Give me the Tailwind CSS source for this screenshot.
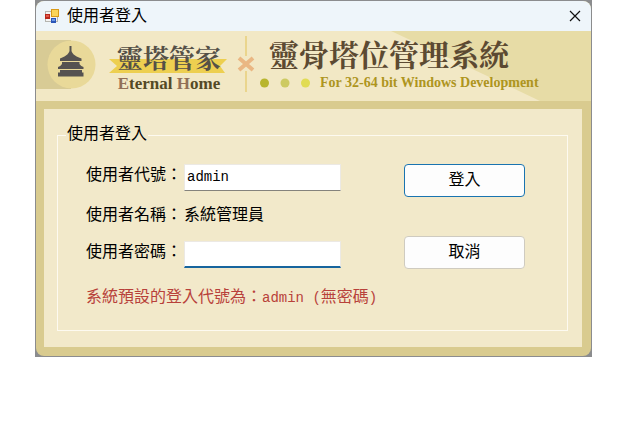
<!DOCTYPE html>
<html lang="zh-Hant">
<head>
<meta charset="utf-8">
<meta name="viewport" content="width=device-width, initial-scale=1">
<title>使用者登入</title>
<script src="https://cdn.jsdelivr.net/npm/@tailwindcss/browser@4"></script>
</head>
<body class="bg-white pl-[35px] pr-[34px] font-['Liberation_Mono','Noto_Sans_CJK_TC',monospace] text-black">
<div class="bg-[#8b8c8e] p-px">
<main class="overflow-hidden rounded-lg bg-[#d9cb8f]">
  <header class="flex h-[30px] items-center bg-[#eef5fa] pb-1 pl-[9px] pr-2">
    <svg class="mt-1 size-[14px]" viewBox="0 0 14 14" aria-hidden="true">
      <rect x="0.5" y="2.5" width="12" height="10" fill="#f4f4f4" stroke="#b5b5b0"/>
      <rect x="0" y="5" width="5" height="5" fill="#b8271c"/><rect x="1" y="6" width="3" height="2" fill="#e0584a"/>
      <rect x="6" y="0" width="8" height="8" fill="#d99a18"/><rect x="7" y="1" width="6" height="6" fill="#fbd55a"/>
      <rect x="6" y="9" width="5" height="5" fill="#2a55b8"/><rect x="7" y="10" width="3" height="2" fill="#6f9be8"/>
    </svg>
    <h1 class="ml-2 flex-1 font-['Noto_Sans_CJK_TC',sans-serif] text-[16px] leading-5">使用者登入</h1>
    <button type="button" aria-label="關閉" class="mt-1 flex size-4 items-center justify-center">
      <svg class="size-[12px]" viewBox="0 0 12 12" aria-hidden="true"><path d="M1 1 11 11M11 1 1 11" stroke="#111" stroke-width="1.2"/></svg>
    </button>
  </header>

  <section class="relative flex h-[70px] overflow-hidden bg-[#f2e8c5]">
    <svg class="absolute inset-0 size-full" viewBox="0 0 555 70" preserveAspectRatio="xMaxYMid slice" aria-hidden="true">
      <path d="M355 0H555V70H504L430 35Z" fill="#e7dca6"/>
    </svg>
    <svg class="relative h-[70px] w-[60px] shrink-0" viewBox="0 0 60 70" aria-hidden="true">
      <path d="M0 9H35V58H0Z" fill="#d8cb95"/>
      <circle cx="35.500" cy="33.500" r="24" fill="#e9d999"/>
      <g fill="#555251">
        <path d="M33.500 15h2v5c1 3.500 4.500 5.500 10 7.500v2.500H24v-2.500c5-2 8.500-4 9.500-7.500Z"/>
        <path d="M26 31h17.500v2c1 1.500 2.500 2.500 4 3v2H22v-2c1.500-.5 3-1.500 4-3Z"/>
        <path d="M24 39h22v2.500h1.500V45.500H22V41.500h2Z"/>
      </g>
    </svg>
    <div class="relative ml-[13px] flex w-[120px] shrink-0 flex-col items-center pt-[11px]">
      <svg class="absolute left-0 top-7 h-[15px] w-[118px]" viewBox="0 0 118 15" aria-hidden="true">
        <path d="M0 0H118L111 7 116 14H0L8 7Z" fill="#edcf50"/>
      </svg>
      <p class="relative font-['Noto_Serif_CJK_TC','Noto_Sans_CJK_TC',serif] text-[26px] font-bold leading-[30px] text-[#555047]">靈塔管家</p>
      <p class="mt-1 whitespace-nowrap font-['Liberation_Serif',serif] text-[17px] font-bold leading-4 text-[#544a25]"><span class="text-[#927057]">E</span>ternal <span class="text-[#927057]">H</span>ome</p>
    </div>
    <svg class="relative ml-[8px] h-[70px] w-[18px] shrink-0" viewBox="0 0 18 70" aria-hidden="true">
      <path d="M9 5V25M9 40V61" stroke="#ead58d" stroke-width="2"/>
      <path d="M2 27 16 39M16 27 2 39" stroke="#eab783" stroke-width="4"/>
    </svg>
    <div class="relative ml-[5px] pt-[6px]">
      <p class="whitespace-nowrap pl-[9px] font-['Noto_Serif_CJK_TC','Noto_Sans_CJK_TC',serif] text-[30px] font-bold leading-8 text-[#5c4a32]">靈骨塔位管理系統</p>
      <div class="mt-[6px] flex items-center">
        <svg class="h-[10px] w-[50px]" viewBox="0 0 50 10" aria-hidden="true">
          <circle cx="4.500" cy="5" r="4.500" fill="#b8b52e"/><circle cx="25" cy="5" r="4.500" fill="#cdca62"/><circle cx="45.500" cy="5" r="4.500" fill="#e1dc54"/>
        </svg>
        <p class="ml-[10px] whitespace-nowrap font-['Liberation_Serif',serif] text-[14px] font-bold leading-4 text-[#ae951e]">For 32-64 bit Windows Development</p>
      </div>
    </div>
  </section>

  <div class="mb-[9px] ml-2 mr-[9px] mt-2 bg-[#f2e9ca] pb-4 pl-[13px] pr-[14px] pt-4">
    <form>
      <fieldset class="border border-[#fdfaf0] pb-[22px] pl-7 pr-[42px] pt-[19px]">
        <legend class="-ml-5 px-px text-[16px] leading-5">使用者登入</legend>
        <div class="flex justify-between">
          <div class="grid grid-cols-[98px_157px] gap-y-[14px] text-[16px]">
            <label for="code" class="h-[27px] leading-6">使用者代號：</label>
            <input id="code" type="text" value="admin" class="h-[27px] w-full border border-[#ece9e4] border-b-[#85837c] bg-white px-[2px] pb-[2px] text-[14px] outline-none">
            <span class="leading-[21px]">使用者名稱：</span>
            <output class="leading-[21px]">系統管理員</output>
            <label for="pass" class="h-[27px] leading-6">使用者密碼：</label>
            <input id="pass" type="password" class="h-[27px] w-full border border-b-2 border-[#ece9e4] border-b-[#17659e] bg-white px-[2px] text-[14px] outline-none">
          </div>
          <div class="flex w-[121px] flex-col gap-[39px] text-[16px]">
            <button type="submit" class="h-[33px] rounded border border-[#1a74b0] bg-[#fdfdfd]">登入</button>
            <button type="button" class="h-[33px] rounded border border-[#cfcbc0] bg-[#fdfdfd]">取消</button>
          </div>
        </div>
        <p class="mt-[19px] text-[16px] leading-5 text-[#b8413a]">系統預設的登入代號為：<span class="text-[14px]">admin (</span>無密碼<span class="text-[14px]">)</span></p>
      </fieldset>
    </form>
  </div>
</main>
</div>
</body>
</html>
